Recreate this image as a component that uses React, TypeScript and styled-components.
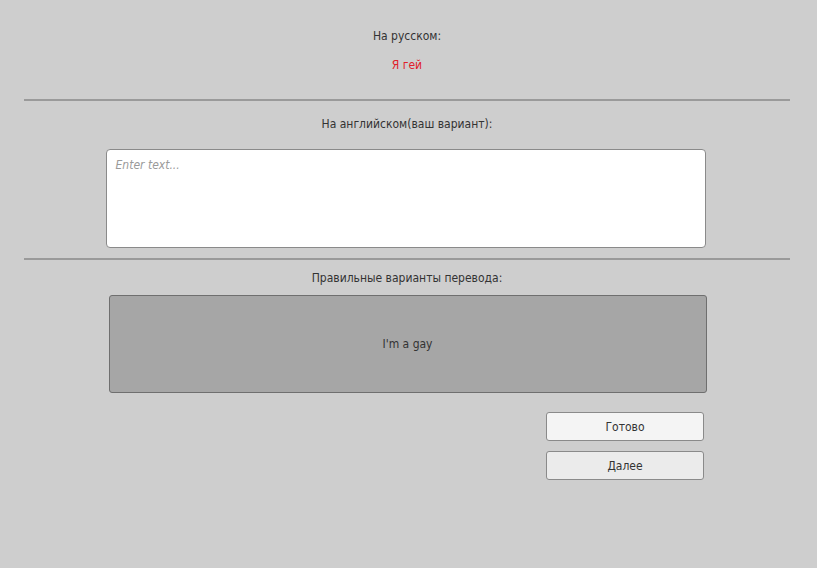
import React, { useState } from "react";
import styled, { createGlobalStyle } from "styled-components";

const GlobalStyle = createGlobalStyle`
  html, body {
    margin: 0;
    padding: 0;
    background: #cecece;
  }
  body {
    font-family: "DejaVu Sans Condensed", "DejaVu Sans", sans-serif;
    font-size: 12px;
    color: #333;
  }
`;

const App = () => {
  const [text, setText] = useState("");

  return (
    <>
      <GlobalStyle />
      <Page>
        <Section>
          <Label>На русском:</Label>
          <Phrase>Я гей</Phrase>
        </Section>
        <Divider />
        <Label $top={15}>На английском(ваш вариант):</Label>
        <TextArea
          placeholder="Enter text..."
          value={text}
          onChange={(e) => setText(e.target.value)}
        />
        <Divider $top={10} />
        <Label $top={10}>Правильные варианты перевода:</Label>
        <AnswerBox>I'm a gay</AnswerBox>
        <Buttons>
          <Button type="button">Готово</Button>
          <Button type="button" $muted>
            Далее
          </Button>
        </Buttons>
      </Page>
    </>
  );
};

export default App;

const Page = styled.main`
  width: 766px;
  height: 568px;
  margin-left: 24px;
  display: flex;
  flex-direction: column;
  align-items: center;
`;

const Section = styled.div`
  display: flex;
  flex-direction: column;
  align-items: center;
  padding-top: 28px;
  gap: 13px;
`;

const Label = styled.div<{ $top?: number }>`
  margin-top: ${(p) => p.$top ?? 0}px;
  line-height: 16px;
  color: #333;
`;

const Phrase = styled.div`
  line-height: 16px;
  color: #e0202a;
`;

const Divider = styled.hr<{ $top?: number }>`
  align-self: stretch;
  margin: ${(p) => p.$top ?? 26}px 0 0;
  border: none;
  height: 2px;
  background: #9a9a9a;
`;

const TextArea = styled.textarea`
  display: block;
  box-sizing: border-box;
  width: 600px;
  height: 99px;
  margin: 17px 3px 0 0;
  padding: 8px 9px;
  resize: none;
  border: 1px solid #8a8a8a;
  border-radius: 4px;
  background: #fff;
  font-family: inherit;
  font-size: 12px;
  color: #333;
  outline: none;

  &::placeholder {
    color: #9a9a9a;
    font-style: italic;
  }
`;

const AnswerBox = styled.div`
  box-sizing: border-box;
  width: 598px;
  height: 98px;
  margin: 9px 0 0 1px;
  display: flex;
  align-items: center;
  justify-content: center;
  background: #a6a6a6;
  border: 1px solid #6f6f6f;
  border-radius: 3px;
  color: #333;
`;

const Buttons = styled.div`
  align-self: flex-end;
  margin: 19px 86px 0 0;
  display: flex;
  flex-direction: column;
  gap: 10px;
`;

const Button = styled.button<{ $muted?: boolean }>`
  box-sizing: border-box;
  width: 158px;
  height: 29px;
  border: 1px solid #8a8a8a;
  border-radius: 3px;
  background: ${(p) => (p.$muted ? "#ebebeb" : "#f4f4f4")};
  font-family: inherit;
  font-size: 12px;
  color: #333;
  cursor: pointer;
`;
